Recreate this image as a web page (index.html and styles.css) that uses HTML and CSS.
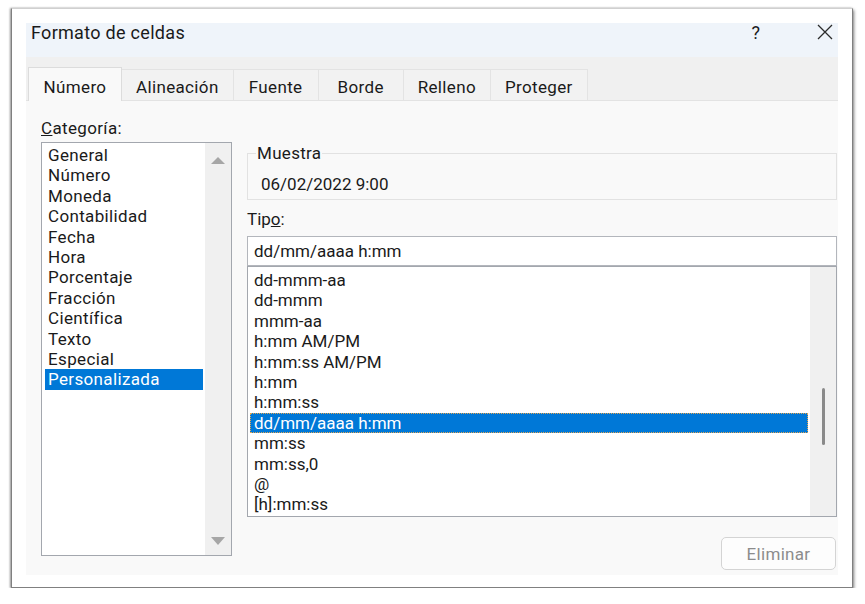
FILE: index.html
```html
<!DOCTYPE html>
<html lang="es">
<head>
    <meta charset="UTF-8">
    <title>Formato de celdas</title>
    <link rel="stylesheet" href="styles.css">
</head>
<body>

<div class="frame">
    <div class="dialog">
        <!-- Title bar -->
        <div class="titlebar">
            <span class="title">Formato de celdas</span>
            <span class="help">?</span>
            <svg class="close" width="16" height="16" viewBox="0 0 16 16">
                <path d="M1 1 L15 15 M15 1 L1 15" stroke="#2b2b2b" stroke-width="1.3" fill="none"/>
            </svg>
        </div>

        <!-- Tabs -->
        <div class="tabs">
            <div class="tab active">Número</div>
            <div class="tab">Alineación</div>
            <div class="tab">Fuente</div>
            <div class="tab">Borde</div>
            <div class="tab">Relleno</div>
            <div class="tab">Proteger</div>
        </div>

        <div class="panel">
            <!-- Category list -->
            <div class="col-left">
                <div class="label"><u>C</u>ategoría:</div>
                <div class="listbox cat-list">
                    <ul class="items">
                        <li>General</li>
                        <li>Número</li>
                        <li>Moneda</li>
                        <li>Contabilidad</li>
                        <li>Fecha</li>
                        <li>Hora</li>
                        <li>Porcentaje</li>
                        <li>Fracción</li>
                        <li>Científica</li>
                        <li>Texto</li>
                        <li>Especial</li>
                        <li class="selected">Personalizada</li>
                    </ul>
                    <div class="scrollbar arrows">
                        <span class="arrow up"></span>
                        <span class="arrow down"></span>
                    </div>
                </div>
            </div>

            <!-- Custom format -->
            <div class="col-right">
                <fieldset class="sample">
                    <legend>Muestra</legend>
                    <div class="sample-value">06/02/2022 9:00</div>
                </fieldset>

                <div class="label tipo">Tip<u>o</u>:</div>
                <div class="type-input">dd/mm/aaaa h:mm</div>

                <div class="listbox type-list">
                    <ul class="items">
                        <li>dd-mmm-aa</li>
                        <li>dd-mmm</li>
                        <li>mmm-aa</li>
                        <li>h:mm AM/PM</li>
                        <li>h:mm:ss AM/PM</li>
                        <li>h:mm</li>
                        <li>h:mm:ss</li>
                        <li class="selected focus">dd/mm/aaaa h:mm</li>
                        <li>mm:ss</li>
                        <li>mm:ss,0</li>
                        <li>@</li>
                        <li>[h]:mm:ss</li>
                    </ul>
                    <div class="scrollbar">
                        <span class="thumb"></span>
                    </div>
                </div>

                <div class="actions">
                    <button class="btn" disabled>Eliminar</button>
                </div>
            </div>
        </div>
    </div>
</div>

</body>
</html>
```

FILE: styles.css
```css
/* Basic Reset */
* {
    margin: 0;
    padding: 0;
    box-sizing: border-box;
}
body {
    font-family: Roboto, "Noto Sans", sans-serif;
    font-size: 17px;
    color: #1a1a1a;
    background-color: #ffffff;
}

/* Picture frame round the dialog */
.frame {
    margin: 8px 0 0 11px;
    width: 842px;
    height: 580px;
    padding: 14px 14px 12px 14px;
    background: #ffffff;
    border: 1px solid #808080;
    border-top-color: #d0d0d0;
    box-shadow: 1px 2px 3px rgba(0, 0, 0, 0.5), -1px 0 2px rgba(0, 0, 0, 0.35);
}
.dialog {
    height: 100%;
    display: flex;
    flex-direction: column;
}

/* Title bar */
.titlebar {
    height: 34px;
    background-color: #eff4fa;
    display: flex;
    align-items: flex-start;
    padding: 0 5px;
}
.title {
    flex: 1;
    font-size: 18px;
    line-height: 20px;
    letter-spacing: 0.3px;
}
.help {
    font-size: 18px;
    line-height: 20px;
    margin-right: 57px;
}
.close {
    margin-top: 1px;
}

/* Tabs */
.tabs {
    height: 44px;
    display: flex;
    align-items: flex-end;
    padding-left: 2px;
    background-color: #f0f0f0;
    border-bottom: 1px solid #e3e3e3;
}
.tab {
    height: 31px;
    min-width: 85px;
    padding: 4px 14px 0;
    line-height: 26px;
    text-align: center;
    letter-spacing: 0.35px;
    background-color: #f2f2f2;
    border: 1px solid #e3e3e3;
    border-bottom: none;
    border-left: none;
}
.tab.active {
    height: 34px;
    margin-bottom: -1px;
    padding: 6px 12px 0;
    min-width: 94px;
    background-color: #f9f9f9;
    border-left: 1px solid #dcdcdc;
    border-color: #dcdcdc;
}

/* Panel */
.panel {
    flex: 1;
    background-color: #f9f9f9;
    display: grid;
    grid-template-columns: 191px 1fr;
    gap: 15px;
    padding: 0 1px 0 15px;
}
.label {
    line-height: 20px;
}
.col-left {
    padding-top: 17px;
    letter-spacing: 0.35px;
}
.col-right {
    display: flex;
    flex-direction: column;
}

/* List boxes */
.listbox {
    display: flex;
    background: #ffffff;
    border: 1px solid #a3a7ae;
}
.items {
    flex: 1;
    list-style: none;
    line-height: 20.4px;
}
.items li {
    white-space: nowrap;
}
.items li.selected {
    background-color: #0078d7;
    color: #ffffff;
}
.items li.focus {
    outline: 1px dotted #e2a552;
    outline-offset: -1px;
}
.scrollbar {
    width: 26px;
    background-color: #f0f0f0;
    display: flex;
    flex-direction: column;
}

.cat-list {
    margin-top: 4px;
    height: 414px;
}
.cat-list .items {
    padding: 2px 2px 0 3px;
}
.cat-list .items li {
    padding-left: 3px;
}
.arrows {
    justify-content: space-between;
    align-items: center;
    padding: 14px 0 10px;
}
.arrow {
    width: 0;
    height: 0;
    border-left: 7px solid transparent;
    border-right: 7px solid transparent;
}
.arrow.up {
    border-bottom: 7px solid #a6a6a6;
}
.arrow.down {
    border-top: 8px solid #a6a6a6;
}

/* Sample box */
.sample {
    margin-top: 42px;
    border: 1px solid #e2e2e2;
    padding: 0 0 5px 8px;
}
.sample legend {
    padding: 0 1px;
    line-height: 20px;
    letter-spacing: 0.3px;
}
.sample-value {
    margin-top: 11px;
    padding-left: 5px;
    line-height: 20px;
}

.tipo {
    margin-top: 9px;
}
.type-input {
    margin-top: 7px;
    height: 30px;
    line-height: 28px;
    padding-left: 6px;
    background: #ffffff;
    border: 1px solid #b3b6bc;
}

.type-list {
    height: 251px;
}
.type-list .items {
    padding: 3px 2px 0 2px;
    overflow: hidden;
}
.type-list .items li {
    padding-left: 4px;
}
.thumb {
    width: 3px;
    height: 57px;
    margin: 121px 0 0 12px;
    border-radius: 2px;
    background-color: #8a8a8a;
}

/* Delete button */
.actions {
    display: flex;
    justify-content: flex-end;
    margin-top: 20px;
    padding-right: 1px;
}
.btn {
    width: 115px;
    height: 33px;
    font-family: inherit;
    font-size: 17px;
    letter-spacing: 0.3px;
    color: #8c8c8c;
    background-color: #fdfdfd;
    border: 1px solid #d4d4d4;
    border-radius: 5px;
}
```
